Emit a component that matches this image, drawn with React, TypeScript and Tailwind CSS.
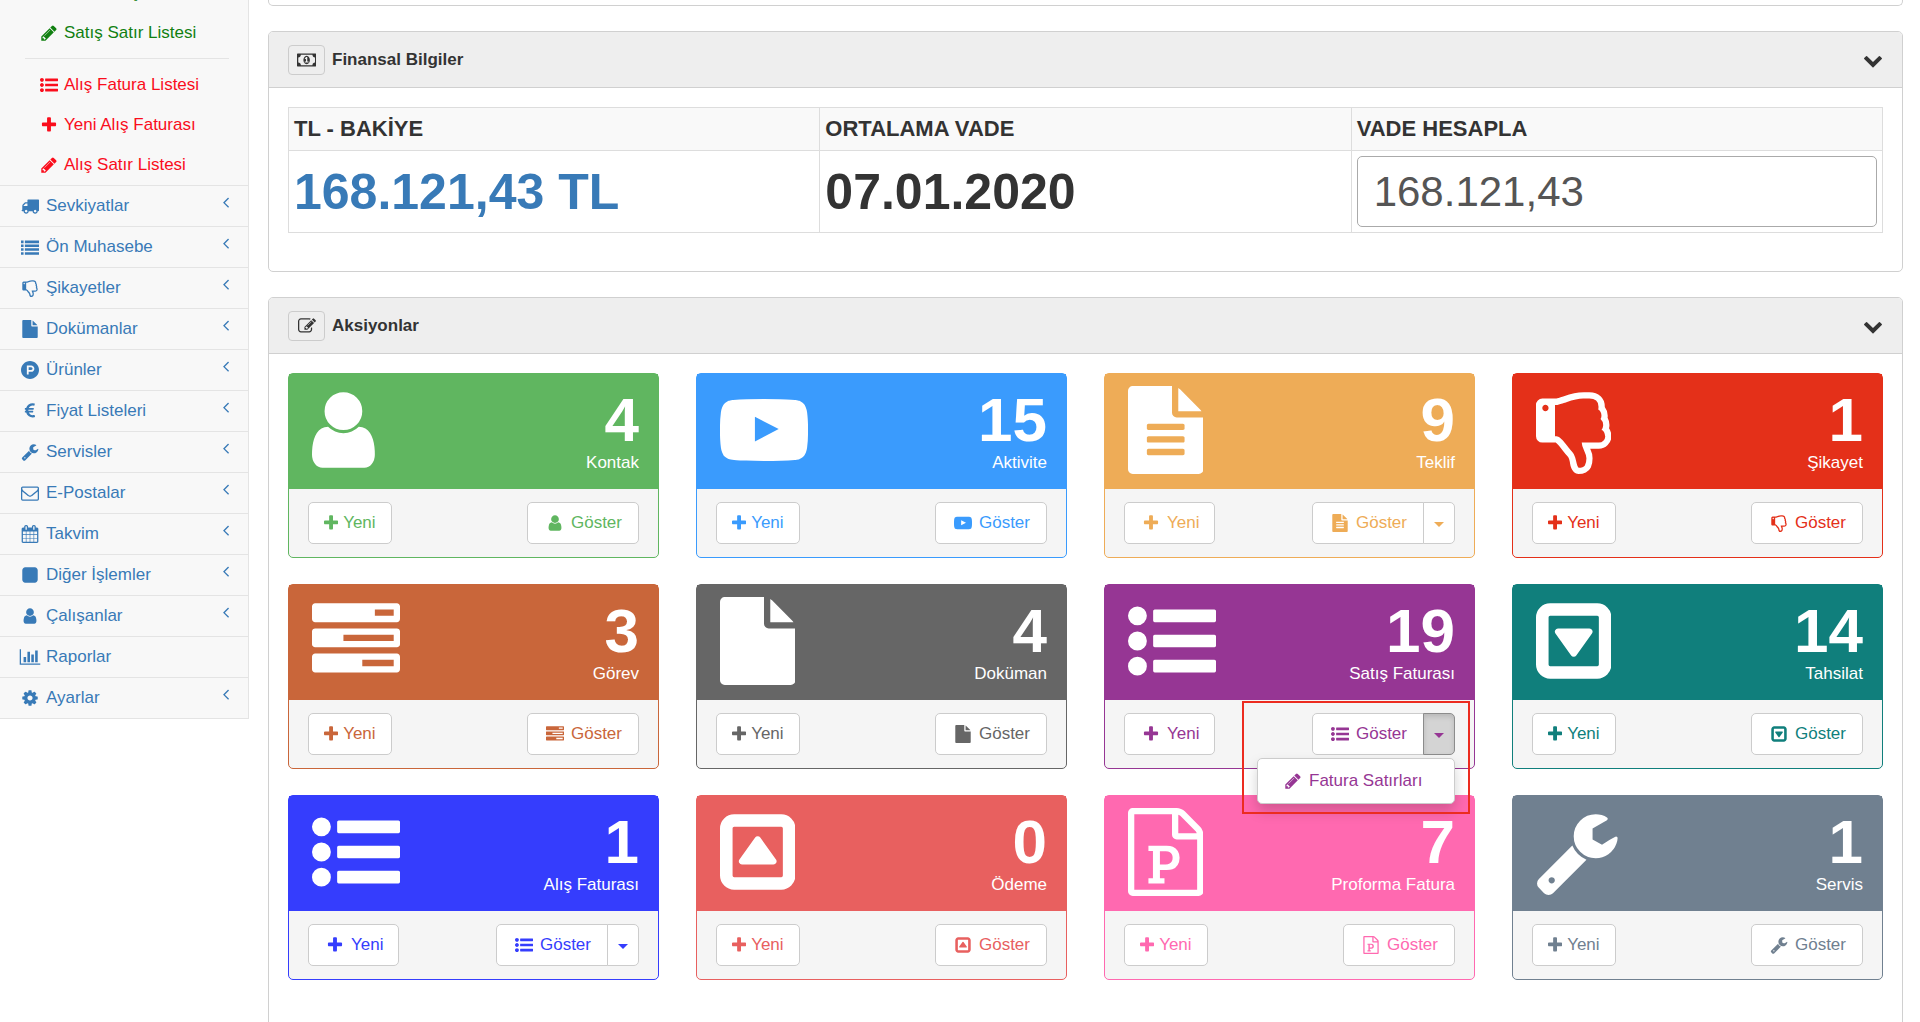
import type { ReactNode } from 'react'
import clsx from 'clsx'

// [x offset, glyph width, path] on a grid that is 1792 units high
type Glyph = [number, number, string]

const SQUARE_FRAME =
  'M1408 1376v-960q0-13-9.5-22.5t-22.5-9.5h-960q-13 0-22.5 9.5t-9.5 22.5v960q0 13 9.5 22.5t22.5 9.5h960q13 0 22.5-9.5t9.5-22.5zm256-960v960q0 119-84.5 203.5t-203.5 84.5h-960q-119 0-203.5-84.5t-84.5-203.5v-960q0-119 84.5-203.5t203.5-84.5h960q119 0 203.5 84.5t84.5 203.5z'

const glyphs = {
  listUl: [0, 1792, 'M384 1408q0 80-56 136t-136 56-136-56-56-136 56-136 136-56 136 56 56 136zm0-512q0 80-56 136t-136 56-136-56-56-136 56-136 136-56 136 56 56 136zm1408 416v192q0 13-9.5 22.5t-22.5 9.5h-1216q-13 0-22.5-9.5t-9.5-22.5v-192q0-13 9.5-22.5t22.5-9.5h1216q13 0 22.5 9.5t9.5 22.5zm-1408-928q0 80-56 136t-136 56-136-56-56-136 56-136 136-56 136 56 56 136zm1408 416v192q0 13-9.5 22.5t-22.5 9.5h-1216q-13 0-22.5-9.5t-9.5-22.5v-192q0-13 9.5-22.5t22.5-9.5h1216q13 0 22.5 9.5t9.5 22.5zm0-512v192q0 13-9.5 22.5t-22.5 9.5h-1216q-13 0-22.5-9.5t-9.5-22.5v-192q0-13 9.5-22.5t22.5-9.5h1216q13 0 22.5 9.5t9.5 22.5z'],
  list: [0, 1792, 'M0 256h256v256h-256zM384 256h1408v256h-1408zM0 640h256v256h-256zM384 640h1408v256h-1408zM0 1024h256v256h-256zM384 1024h1408v256h-1408zM0 1408h256v256h-256zM384 1408h1408v256h-1408z'],
  plus: [192, 1408, 'M1600 736v192q0 40-28 68t-68 28h-416v416q0 40-28 68t-68 28h-192q-40 0-68-28t-28-68v-416h-416q-40 0-68-28t-28-68v-192q0-40 28-68t68-28h416v-416q0-40 28-68t68-28h192q40 0 68 28t28 68v416h416q40 0 68 28t28 68z'],
  pencil: [128, 1536, 'M491 1536l91-91-235-235-91 91v107h128v128h107zm523-928q0-22-22-22-10 0-17 7l-542 542q-7 7-7 17 0 22 22 22 10 0 17-7l542-542q7-7 7-17zm-54-192l416 416-832 832h-416v-416zm683 96q0 53-37 90l-166 166-416-416 166-165q36-38 90-38 53 0 91 38l235 234q37 39 37 91z'],
  truck: [0, 1792, 'M640 1408q0-52-38-90t-90-38-90 38-38 90 38 90 90 38 90-38 38-90zm-384-512h384v-256h-158q-13 0-22 9l-195 195q-9 9-9 22v30zm1280 512q0-52-38-90t-90-38-90 38-38 90 38 90 90 38 90-38 38-90zm256-1088v1024q0 15-4 26.5t-13.5 18.5-16.5 11.5-23.5 6-22.5 2-25.5 0-22.5-.5q0 106-75 181t-181 75-181-75-75-181h-384q0 106-75 181t-181 75-181-75-75-181h-64q-3 0-22.5.5t-25.5 0-22.5-2-23.5-6-16.5-11.5-13.5-18.5-4-26.5q0-26 19-45t45-19v-320q0-8-.5-35t0-38 2.5-34.5 6.5-37 14-30.5 22.5-30l198-198q19-19 50.5-32t58.5-13h160v-192q0-26 19-45t45-19h1024q26 0 45 19t19 45z'],
  thumbsDown: [128, 1536, 'M384 448q0-26-19-45t-45-19-45 19-19 45 19 45 45 19 45-19 19-45zm1152 576q0-35-21.5-81t-53.5-47q15-17 25-47.5t10-55.5q0-69-53-119 18-31 18-69 0-37-17.5-73.5t-47.5-52.5q5-30 5-56 0-85-49-126t-136-41h-128q-131 0-342 73-5 2-29 10.5t-35.5 12.5-35 11.5-37 10.5-31 7.5-31.5 3.5h-32v640h32q16 0 35.5 9t40 27 38.5 35.5 40 44 34.5 42.5 31.5 41 23 30q55 68 77 91 41 43 59.5 109.5t30.5 125.5 38 85q96 0 128-47t32-145q0-59-48-160.5t-48-159.5h352q50 0 89-38.5t39-89.5zm128 1q0 103-76 179t-180 76h-176q48 99 48 192 0 118-35 186-35 69-102 101.5t-151 32.5q-51 0-90-37-34-33-54-82t-25.5-90.5-17.5-84.5-31-64q-48-50-107-127-101-131-137-155h-274q-53 0-90.5-37.5t-37.5-90.5v-640q0-53 37.5-90.5t90.5-37.5h288q22 0 138-40 128-44 223-66t200-22h112q140 0 226.5 79t85.5 216v5q60 77 60 178 0 22-3 43 38 67 38 144 0 36-9 69 49 73 49 163z'],
  file: [128, 1536, 'M1152 512v-472q22 14 36 28l408 408q14 14 28 36h-472zm-128 32q0 40 28 68t68 28h544v1056q0 40-28 68t-68 28h-1344q-40 0-68-28t-28-68v-1600q0-40 28-68t68-28h800v544z'],
  fileText: [128, 1536, 'M1596 476q14 14 28 36h-472v-472q22 14 36 28zm-476 164h544v1056q0 40-28 68t-68 28h-1344q-40 0-68-28t-28-68v-1600q0-40 28-68t68-28h800v544q0 40 28 68t68 28zm160 736v-64q0-14-9-23t-23-9h-704q-14 0-23 9t-9 23v64q0 14 9 23t23 9h704q14 0 23-9t9-23zm0-256v-64q0-14-9-23t-23-9h-704q-14 0-23 9t-9 23v64q0 14 9 23t23 9h704q14 0 23-9t9-23zm0-256v-64q0-14-9-23t-23-9h-704q-14 0-23 9t-9 23v64q0 14 9 23t23 9h704q14 0 23-9t9-23z'],
  filePowerpoint: [128, 1536, 'M1596 380q28 28 48 76t20 88v1152q0 40-28 68t-68 28h-1344q-40 0-68-28t-28-68v-1600q0-40 28-68t68-28h896q40 0 88 20t76 48zm-444-244v376h376q-10-29-22-41l-313-313q-12-12-41-22zm384 1528v-1024h-416q-40 0-68-28t-28-68v-416h-768v1536h1280zm-992-234v106h327v-106h-93v-167h137q76 0 118-15 67-23 106.5-87t39.5-146q0-81-37-141t-100-87q-48-19-130-19h-368v107h92v555h-92zm353-280h-119v-268h120q52 0 83 18 56 33 56 115 0 89-62 117-31 18-78 18z'],
  productHunt: [0, 1792, 'M1150 762q0 56-39.5 95t-95.5 39h-253v-269h253q56 0 95.5 39.5t39.5 95.5zm179 0q0-130-91.5-222t-222.5-92h-433v896h180v-269h253q130 0 222-91.5t92-221.5zm463 134q0 182-71 348t-191 286-286 191-348 71-348-71-286-191-191-286-71-348 71-348 191-286 286-191 348-71 348 71 286 191 191 286 71 348z'],
  euro: [384, 1024, 'M1360 1307l35 159q3 12-3 22.5t-17 14.5l-5 1q-4 2-10.5 3.5t-16 4.5-21.5 5.5-25.5 5-30 5-33.5 4.5-36.5 3-38.5 1q-234 0-409-130.5t-238-351.5h-95q-13 0-22.5-9.5t-9.5-22.5v-113q0-13 9.5-22.5t22.5-9.5h66q-2-57 1-105h-67q-14 0-23-9t-9-23v-114q0-14 9-23t23-9h98q67-210 243.5-338t400.5-128q102 0 194 23 11 3 20 15 6 11 3 24l-43 159q-3 13-14 19.5t-24 2.5l-4-1q-4-1-11.5-2.5l-17.5-3.5-22.5-3.5-26-3-29-2.5-29.5-1q-126 0-226 64t-150 176h468q16 0 25 12 10 12 7 26l-24 114q-5 26-32 26h-488q-3 37 0 105h459q15 0 25 12 9 12 6 27l-24 112q-2 11-11 18.5t-20 7.5h-387q48 117 149.5 185.5t228.5 68.5q18 0 36-1.5t33.5-3.5 29.5-4.5 24.5-5 18.5-4.5l12-3 5-2q13-5 26 2 12 7 15 21z'],
  wrench: [64, 1664, 'M448 1472q0-26-19-45t-45-19-45 19-19 45 19 45 45 19 45-19 19-45zm644-420l-682 682q-37 37-90 37-52 0-91-37l-106-108q-38-36-38-90 0-53 38-91l681-681q39 98 114.5 173.5t173.5 114.5zm634-435q0 39-23 106-47 134-164.5 217.5t-258.5 83.5q-185 0-316.5-131.5t-131.5-316.5 131.5-316.5 316.5-131.5q58 0 121.5 16.5t107.5 46.5q16 11 16 28t-16 28l-293 169v224l193 107q5-3 79-48.5t135.5-81 70.5-35.5q15 0 23.5 10t8.5 25z'],
  envelope: [0, 1792, 'M1664 1504v-768q-32 36-69 66-268 206-426 338-51 43-83 67t-86.5 48.5-102.5 24.5h-2q-48 0-102.5-24.5t-86.5-48.5-83-67q-158-132-426-338-37-30-69-66v768q0 13 9.5 22.5t22.5 9.5h1472q13 0 22.5-9.5t9.5-22.5zm0-1051v-24.5l-.5-13-3-12.5-5.5-9-9-7.5-14-2.5h-1472q-13 0-22.5 9.5t-9.5 22.5q0 168 147 284 193 152 401 317 6 5 35 29.5t46 37.5 44.5 31.5 50.5 27.5 43 9h2q20 0 43-9t50.5-27.5 44.5-31.5 46-37.5 35-29.5q208-165 401-317 54-43 100.5-115.5t46.5-131.5zm128-37v1088q0 66-47 113t-113 47h-1472q-66 0-113-47t-47-113v-1088q0-66 47-113t113-47h1472q66 0 113 47t47 113z'],
  calendar: [64, 1664, 'M192 1664h288v-288h-288v288zm352 0h320v-288h-320v288zm-352-352h288v-320h-288v320zm352 0h320v-320h-320v320zm-352-384h288v-288h-288v288zm736 736h320v-288h-320v288zm-384-736h320v-288h-320v288zm768 736h288v-288h-288v288zm-384-352h320v-320h-320v320zm-352-864v-288q0-13-9.5-22.5t-22.5-9.5h-64q-13 0-22.5 9.5t-9.5 22.5v288q0 13 9.5 22.5t22.5 9.5h64q13 0 22.5-9.5t9.5-22.5zm736 864h288v-320h-288v320zm-384-384h320v-288h-320v288zm384 0h288v-288h-288v288zm32-480v-288q0-13-9.5-22.5t-22.5-9.5h-64q-13 0-22.5 9.5t-9.5 22.5v288q0 13 9.5 22.5t22.5 9.5h64q13 0 22.5-9.5t9.5-22.5zm384-64v1280q0 52-38 90t-90 38h-1408q-52 0-90-38t-38-90v-1280q0-52 38-90t90-38h128v-96q0-66 47-113t113-47h64q66 0 113 47t47 113v96h384v-96q0-66 47-113t113-47h64q66 0 113 47t47 113v96h128q52 0 90 38t38 90z'],
  square: [128, 1536, 'M1664 416v960q0 119-84.5 203.5t-203.5 84.5h-960q-119 0-203.5-84.5t-84.5-203.5v-960q0-119 84.5-203.5t203.5-84.5h960q119 0 203.5 84.5t84.5 203.5z'],
  user: [256, 1280, 'M1536 1399q0 109-62.5 187t-150.5 78h-854q-88 0-150.5-78t-62.5-187q0-85 8.5-160.5t31.5-152 58.5-131 94-89 134.5-34.5q131 128 313 128t313-128q76 0 134.5 34.5t94 89 58.5 131 31.5 152 8.5 160.5zm-256-887q0 159-112.5 271.5t-271.5 112.5-271.5-112.5-112.5-271.5 112.5-271.5 271.5-112.5 271.5 112.5 112.5 271.5z'],
  barChart: [0, 2048, 'M640 896v512h-256v-512h256zm384-512v1024h-256v-1024h256zm1024 1152v128h-2048v-1536h128v1408h1920zm-640-896v768h-256v-768h256zm384-384v1152h-256v-1152h256z'],
  cog: [128, 1536, 'M1152 896q0-106-75-181t-181-75-181 75-75 181 75 181 181 75 181-75 75-181zm512-109v222q0 12-8 23t-20 13l-185 28q-19 54-39 91 35 50 107 138 10 12 10 25t-9 23q-27 37-99 108t-94 71q-12 0-26-9l-138-108q-44 23-91 38-16 136-29 186-7 28-36 28h-222q-14 0-24.5-8.5t-11.5-21.5l-28-184q-49-16-90-37l-141 107q-10 9-25 9-14 0-25-11-126-114-165-168-7-10-7-23 0-12 8-23 15-21 51-66.5t54-70.5q-27-50-41-99l-183-27q-13-2-21-12.5t-8-23.5v-222q0-12 8-23t19-13l186-28q14-46 39-92-40-57-107-138-10-12-10-24 0-10 9-23 26-36 98.5-107.5t94.5-71.5q13 0 26 10l138 107q44-23 91-38 16-136 29-186 7-28 36-28h222q14 0 24.5 8.5t11.5 21.5l28 184q49 16 90 37l142-107q9-9 24-9 13 0 25 10 129 119 165 170 7 8 7 22 0 12-8 23-15 21-51 66.5t-54 70.5q26 50 41 98l183 28q13 2 21 12.5t8 23.5z'],
  money: [0, 1920, 'M768 1152h384v-96h-128v-448h-114l-148 137 77 80q42-37 55-57h2v288h-128v96zm512-256q0 70-21 142t-59.5 134-101.5 101-138 39-138-39-101.5-101-59.5-134-21-142 21-142 59.5-134 101.5-101 138-39 138 39 101.5 101 59.5 134 21 142zm512 256v-512q-106 0-181-75t-75-181h-1152q0 106-75 181t-181 75v512q106 0 181 75t75 181h1152q0-106 75-181t181-75zm128-832v1152q0 26-19 45t-45 19h-1792q-26 0-45-19t-19-45v-1152q0-26 19-45t45-19h1792q26 0 45 19t19 45z'],
  edit: [0, 1792, 'M888 1184l116-116-152-152-116 116v56h96v96h56zm440-720q-16-16-33 1l-350 350q-17 17-1 33t33-1l350-350q17-17 1-33zm80 594v190q0 119-84.5 203.5t-203.5 84.5h-832q-119 0-203.5-84.5t-84.5-203.5v-832q0-119 84.5-203.5t203.5-84.5h832q63 0 117 25 15 7 18 23 3 17-9 29l-49 49q-14 14-32 8-23-6-45-6h-832q-66 0-113 47t-47 113v832q0 66 47 113t113 47h832q66 0 113-47t47-113v-126q0-13 9-22l64-64q15-15 35-7t20 29zm-96-738l288 288-672 672h-288v-288zm444 132l-92 92-288-288 92-92q28-28 68-28t68 28l152 152q28 28 28 68t-28 68z'],
  angleLeft: [512, 768, 'M1203 544q0 13-10 23l-393 393 393 393q10 10 10 23t-10 23l-50 50q-10 10-23 10t-23-10l-466-466q-10-10-10-23t10-23l466-466q10-10 23-10t23 10l50 50q10 10 10 23z'],
  chevronDown: [0, 1792, 'M1683 808l-742 741q-19 19-45 19t-45-19l-742-741q-19-19-19-45.5t19-45.5l166-165q19-19 45-19t45 19l531 531 531-531q19-19 45-19t45 19l166 165q19 19 19 45.5t-19 45.5z'],
  youtube: [0, 1792, 'M711 1128l484-250-484-253v503zm185-862q168 0 324.5 4.5t229.5 9.5l73 4q1 0 17 1.5t23 3 23.5 4.5 28.5 8 28 13 31 19.5 29 26.5q6 6 15.5 18.5t29 58.5 26.5 101q8 64 12.5 136.5t5.5 113.5v176q1 145-18 290-7 55-25 99.5t-32 61.5l-14 17q-14 15-29 26.5t-31 19-28 12.5-28.5 8-24 4.5-23 3-16.5 1.5q-251 19-627 19-207-2-359.5-6.5t-200.5-7.5l-49-4-36-4q-36-5-54.5-10t-51-21-56.5-41q-6-6-15.5-18.5t-29-58.5-26.5-101q-8-64-12.5-136.5t-5.5-113.5v-176q-1-145 18-290 7-55 25-99.5t32-61.5l14-17q14-15 29-26.5t31-19.5 28-13 28.5-8 23.5-4.5 23-3 17-1.5q251-18 627-18z'],
  tasks: [0, 1792, 'M1024 1408h640v-128h-640v128zm-384-512h1024v-128h-1024v128zm640-512h384v-128h-384v128zm512 832v256q0 26-19 45t-45 19h-1664q-26 0-45-19t-19-45v-256q0-26 19-45t45-19h1664q26 0 45 19t19 45zm0-512v256q0 26-19 45t-45 19h-1664q-26 0-45-19t-19-45v-256q0-26 19-45t45-19h1664q26 0 45 19t19 45zm0-512v256q0 26-19 45t-45 19h-1664q-26 0-45-19t-19-45v-256q0-26 19-45t45-19h1664q26 0 45 19t19 45z'],
  caretSquareDown: [128, 1536, 'M1273 675q18 35-5 66l-320 448q-18 27-52 27t-52-27l-320-448q-23-31-5-66 17-35 57-35h640q40 0 57 35z' + SQUARE_FRAME],
  caretSquareUp: [128, 1536, 'M1273 1117q-17 35-57 35h-640q-40 0-57-35-18-35 5-66l320-448q18-27 52-27t52 27l320 448q23 31 5 66z' + SQUARE_FRAME],
} satisfies Record<string, Glyph>

type IconName = keyof typeof glyphs

function Icon({ name, className }: { name: IconName; className: string }) {
  const [x, width, d] = glyphs[name]
  return (
    <svg viewBox={`${x} 0 ${width} 1792`} fill="currentColor" fillRule="evenodd" className={clsx('shrink-0', className)} aria-hidden="true">
      <path d={d} />
    </svg>
  )
}

const subItems: { icon: IconName; label: string; color: string; divider?: boolean }[] = [
  { icon: 'plus', label: 'Yeni Satış Faturası', color: 'text-[#118011]' },
  { icon: 'pencil', label: 'Satış Satır Listesi', color: 'text-[#118011]', divider: true },
  { icon: 'listUl', label: 'Alış Fatura Listesi', color: 'text-[#fa0d1c]' },
  { icon: 'plus', label: 'Yeni Alış Faturası', color: 'text-[#fa0d1c]' },
  { icon: 'pencil', label: 'Alış Satır Listesi', color: 'text-[#fa0d1c]' },
]

const menuItems: { icon: IconName; label: string; leaf?: boolean }[] = [
  { icon: 'truck', label: 'Sevkiyatlar' },
  { icon: 'list', label: 'Ön Muhasebe' },
  { icon: 'thumbsDown', label: 'Şikayetler' },
  { icon: 'file', label: 'Dokümanlar' },
  { icon: 'productHunt', label: 'Ürünler' },
  { icon: 'euro', label: 'Fiyat Listeleri' },
  { icon: 'wrench', label: 'Servisler' },
  { icon: 'envelope', label: 'E-Postalar' },
  { icon: 'calendar', label: 'Takvim' },
  { icon: 'square', label: 'Diğer İşlemler' },
  { icon: 'user', label: 'Çalışanlar' },
  { icon: 'barChart', label: 'Raporlar', leaf: true },
  { icon: 'cog', label: 'Ayarlar' },
]

function Sidebar() {
  return (
    <nav className="w-[249px] shrink-0 self-start border-r border-b border-[#e4e4e4] bg-[#f8f8f8]">
      {/* Fatura alt menüsü, üstü kaydırılmış */}
      <ul className="-mt-[27px]">
        {subItems.map((item) => (
          <li key={item.label}>
            <a href="#" className={clsx('flex h-10 items-center gap-1 pl-[38px]', item.color)}>
              <Icon name={item.icon} className="h-[18px] w-[22px]" />
              {item.label}
            </a>
            {item.divider && <hr className="mt-[5px] mr-[19px] mb-1.5 ml-[25px] border-[#e4e4e4]" />}
          </li>
        ))}
      </ul>
      <ul className="text-[#387ab7]">
        {menuItems.map((item) => (
          <li key={item.label} className="border-t border-[#e4e4e4]">
            <a href="#" className="flex h-10 items-center gap-[5px] pr-[18px] pl-[19px]">
              <Icon name={item.icon} className="h-[18px] w-[22px]" />
              <span className="flex-1">{item.label}</span>
              {!item.leaf && <Icon name="angleLeft" className="mb-2 h-[18px]" />}
            </a>
          </li>
        ))}
      </ul>
    </nav>
  )
}

function Panel({ icon, title, children }: { icon: IconName; title: string; children: ReactNode }) {
  return (
    <section className="rounded-[5px] border border-[#d0d0d0] bg-white">
      <header className="flex h-14 items-center gap-[7px] rounded-t-[4px] border-b border-[#d0d0d0] bg-[#eeeeee] px-[19px]">
        <span className="flex h-[30px] w-[37px] items-center justify-center rounded-[4px] border border-[#cccccc]">
          <Icon name={icon} className="h-[18px]" />
        </span>
        <h2 className="flex-1 font-bold">{title}</h2>
        <button type="button" aria-label="Daralt">
          <Icon name="chevronDown" className="size-5" />
        </button>
      </header>
      <div className="p-[19px]">{children}</div>
    </section>
  )
}

function FinanceTable() {
  return (
    <table className="mb-[19px] w-full table-fixed border-collapse text-left">
      <thead>
        <tr className="h-[43px] bg-[#f9f9f9] text-[22px]">
          <th className="border border-[#dddddd] px-[5px]">TL - BAKİYE</th>
          <th className="border border-[#dddddd] px-[5px]">ORTALAMA VADE</th>
          <th className="border border-[#dddddd] px-[5px]">
            <label htmlFor="vade">VADE HESAPLA</label>
          </th>
        </tr>
      </thead>
      <tbody>
        <tr className="h-[82px] text-[50px] leading-[60px] font-bold">
          <td className="border border-[#dddddd] px-[5px]">
            <a href="#" className="text-[#387ab7]">168.121,43 TL</a>
          </td>
          <td className="border border-[#dddddd] px-[5px]">07.01.2020</td>
          <td className="border border-[#dddddd] px-[5px]">
            <input
              id="vade"
              defaultValue="168.121,43"
              className="block h-[71px] w-full rounded-[5px] border border-[#aaaaaa] bg-white px-4 text-[42px] font-normal text-[#555555] outline-none"
            />
          </td>
        </tr>
      </tbody>
    </table>
  )
}

type Action = {
  icon: IconName
  count: number
  label: string
  bg: string
  border: string
  text: string
  split?: boolean
  open?: boolean
}

const actions: Action[] = [
  { icon: 'user', count: 4, label: 'Kontak', bg: 'bg-[#60b660]', border: 'border-[#60b660]', text: 'text-[#60b660]' },
  { icon: 'youtube', count: 15, label: 'Aktivite', bg: 'bg-[#3a9bfd]', border: 'border-[#3a9bfd]', text: 'text-[#3a9bfd]' },
  { icon: 'fileText', count: 9, label: 'Teklif', bg: 'bg-[#eeac57]', border: 'border-[#eeac57]', text: 'text-[#eeac57]', split: true },
  { icon: 'thumbsDown', count: 1, label: 'Şikayet', bg: 'bg-[#e43019]', border: 'border-[#e43019]', text: 'text-[#e43019]' },
  { icon: 'tasks', count: 3, label: 'Görev', bg: 'bg-[#c9663a]', border: 'border-[#c9663a]', text: 'text-[#c9663a]' },
  { icon: 'file', count: 4, label: 'Doküman', bg: 'bg-[#666666]', border: 'border-[#666666]', text: 'text-[#666666]' },
  { icon: 'listUl', count: 19, label: 'Satış Faturası', bg: 'bg-[#963694]', border: 'border-[#963694]', text: 'text-[#963694]', split: true, open: true },
  { icon: 'caretSquareDown', count: 14, label: 'Tahsilat', bg: 'bg-[#107f7c]', border: 'border-[#107f7c]', text: 'text-[#107f7c]' },
  { icon: 'listUl', count: 1, label: 'Alış Faturası', bg: 'bg-[#353dfd]', border: 'border-[#353dfd]', text: 'text-[#353dfd]', split: true },
  { icon: 'caretSquareUp', count: 0, label: 'Ödeme', bg: 'bg-[#e8605f]', border: 'border-[#e8605f]', text: 'text-[#e8605f]' },
  { icon: 'filePowerpoint', count: 7, label: 'Proforma Fatura', bg: 'bg-[#ff69b0]', border: 'border-[#ff69b0]', text: 'text-[#ff69b0]' },
  { icon: 'wrench', count: 1, label: 'Servis', bg: 'bg-[#708090]', border: 'border-[#708090]', text: 'text-[#708090]' },
]

function ActionCard({ action }: { action: Action }) {
  const { icon, count, label, bg, border, text, split, open } = action
  return (
    <article className={clsx('rounded-[5px] border bg-[#f5f5f5]', border)}>
      <div className={clsx('flex items-start justify-between pr-[19px] pb-3.5 pl-[23px] text-white', bg)}>
        <Icon name={icon} className="mt-3 h-[88px]" />
        <div className="pt-[15px] text-right">
          <div className="text-[62px] leading-[62px] font-bold">{count}</div>
          <div className="leading-6">{label}</div>
        </div>
      </div>
      <div className={clsx('flex justify-between px-[19px] py-[13px]', text)}>
        <button type="button" className="flex h-[42px] items-center gap-[5px] rounded-[5px] border border-[#cccccc] bg-white px-[15px]">
          <Icon name="plus" className={split ? 'h-[18px] w-[22px]' : 'h-[18px]'} />
          Yeni
        </button>
        <div className="relative flex">
          <button
            type="button"
            className={clsx('flex h-[42px] items-center gap-[5px] border border-[#cccccc] bg-white px-4', split ? 'rounded-l-[5px]' : 'rounded-[5px]')}
          >
            <Icon name={icon} className="h-[18px] w-[22px]" />
            Göster
          </button>
          {split && (
            <button
              type="button"
              aria-label="Diğer"
              aria-expanded={open}
              className={clsx(
                '-ml-px flex h-[42px] w-8 items-center justify-center rounded-r-[5px] border pt-0.5',
                open ? 'border-[#8c8c8c] bg-[#d4d4d4] shadow-[inset_0_3px_5px_rgba(0,0,0,0.125)]' : 'border-[#cccccc] bg-white',
              )}
            >
              <svg viewBox="0 0 10 5" fill="currentColor" className="h-[5px] w-2.5" aria-hidden="true">
                <path d="M0 0h10L5 5z" />
              </svg>
            </button>
          )}
          {open && (
            <>
              <div className="absolute top-[45px] right-0 z-10 w-[198px] rounded-[5px] border border-[#cccccc] bg-white shadow-[0_7px_14px_rgba(0,0,0,0.18)]">
                <a href="#" className="flex h-11 items-center gap-[5px] pl-6">
                  <Icon name="pencil" className="h-[18px] w-[22px]" />
                  Fatura Satırları
                </a>
              </div>
              {/* Kırmızı vurgu çerçevesi */}
              <div className="pointer-events-none absolute -top-3 -right-[15px] -bottom-[59px] -left-[70px] z-20 border-2 border-[#ec2c20]" />
            </>
          )}
        </div>
      </div>
    </article>
  )
}

export default function App() {
  return (
    <div className="flex min-h-screen overflow-hidden bg-white font-['Liberation_Sans',Arial,sans-serif] text-[17px] leading-6 text-[#333333]">
      <Sidebar />
      <main className="ml-[19px] flex min-w-0 flex-1 flex-col gap-[25px] pr-[17px]">
        <div className="h-1.5 rounded-b-[5px] border border-t-0 border-[#d0d0d0]" />
        <Panel icon="money" title="Finansal Bilgiler">
          <FinanceTable />
        </Panel>
        <Panel icon="edit" title="Aksiyonlar">
          <div className="mb-10 grid grid-cols-4 gap-x-[37px] gap-y-[26px]">
            {actions.map((action) => (
              <ActionCard key={action.label} action={action} />
            ))}
          </div>
        </Panel>
      </main>
    </div>
  )
}
